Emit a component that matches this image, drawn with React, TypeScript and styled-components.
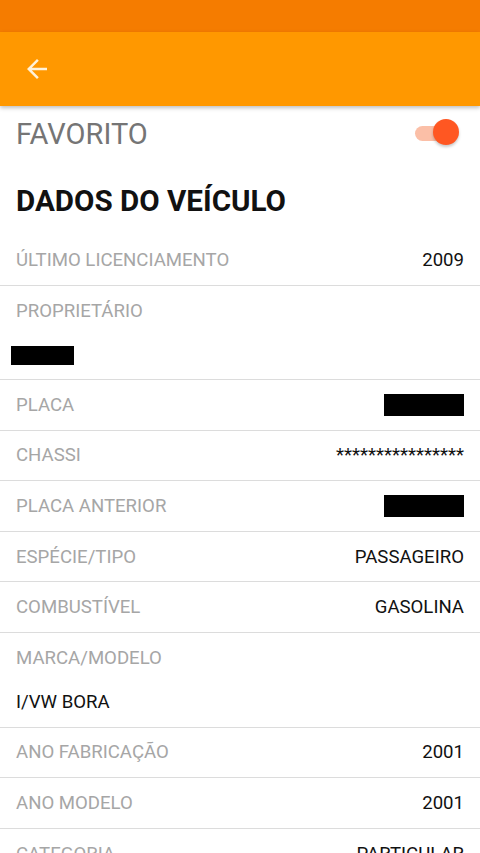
import React from "react";
import styled, { createGlobalStyle } from "styled-components";

const Global = createGlobalStyle`
  html, body { margin: 0; padding: 0; background: #fff; }
  body { font-family: Roboto, "Noto Sans", Arial, sans-serif; overflow: hidden; }
`;

const Page = styled.div`
  width: 480px;
  height: 853px;
  overflow: hidden;
  display: flex;
  flex-direction: column;
  background: #fff;
`;

const StatusBar = styled.div`
  height: 32px;
  background: #f57c00;
  flex: none;
`;

const AppBar = styled.div`
  height: 74px;
  background: #ff9800;
  display: flex;
  align-items: center;
  padding-left: 22px;
  box-shadow: 0 2px 4px rgba(0, 0, 0, 0.25);
  flex: none;
  position: relative;
  z-index: 1;
`;

const BackButton = styled.button`
  border: none;
  background: none;
  padding: 0;
  margin: 0;
  width: 30px;
  height: 30px;
  display: flex;
  align-items: center;
  justify-content: center;
  color: rgba(255, 250, 235, 0.92);
`;

const Content = styled.div`
  display: flex;
  flex-direction: column;
`;

const FavRow = styled.div`
  height: 54px;
  display: flex;
  align-items: center;
  justify-content: space-between;
  padding: 0 21px 0 16px;
  box-sizing: border-box;
`;

const FavLabel = styled.span`
  font-size: 29px;
  color: #757575;
  margin-top: 1px;
`;

const Switch = styled.div`
  position: relative;
  width: 44px;
  height: 28px;
  display: flex;
  align-items: center;
`;

const Track = styled.div`
  width: 36px;
  height: 15px;
  border-radius: 8px;
  background: #fbbfa7;
`;

const Thumb = styled.div`
  position: absolute;
  right: 0;
  top: 0;
  width: 26px;
  height: 26px;
  border-radius: 50%;
  background: #ff5722;
  box-shadow: 0 2px 3px rgba(0, 0, 0, 0.22);
`;

const SectionTitle = styled.h2`
  margin: 0;
  height: 75px;
  box-sizing: border-box;
  display: flex;
  align-items: center;
  padding: 7px 16px 0;
  font-size: 29.6px;
  font-weight: 700;
  color: #111;
`;

const Row = styled.div<{ $stacked?: boolean }>`
  display: flex;
  flex-direction: ${(p) => (p.$stacked ? "column" : "row")};
  justify-content: ${(p) => (p.$stacked ? "flex-start" : "space-between")};
  align-items: ${(p) => (p.$stacked ? "flex-start" : "center")};
  padding: 0 16px;
  border-bottom: 1.6px solid #dcdcdc;
  box-sizing: border-box;
  height: ${(p) => (p.$stacked ? "94.5px" : "50.6px")};
  flex: none;
`;

const Label = styled.span<{ $stacked?: boolean }>`
  font-size: 18.6px;
  color: #a6a6a6;
  ${(p) => (p.$stacked ? "margin-top: 14px;" : "")}
`;

const Value = styled.span<{ $stacked?: boolean }>`
  font-size: 18.6px;
  color: #111;
  ${(p) => (p.$stacked ? "margin-top: 22px;" : "")}
`;

const Redacted = styled.div<{ $w: number; $h: number; $left?: boolean }>`
  width: ${(p) => p.$w}px;
  height: ${(p) => p.$h}px;
  background: #000;
  ${(p) => (p.$left ? "margin-left: -5px; margin-top: 24px;" : "")}
`;

const ArrowBack = () => (
  <svg width="30" height="30" viewBox="0 0 24 24" fill="currentColor">
    <path d="M20 11H7.83l5.59-5.59L12 4l-8 8 8 8 1.41-1.41L7.83 13H20v-2z" />
  </svg>
);

type Item =
  | { label: string; value: string; stacked?: boolean }
  | { label: string; redact: [number, number]; stacked?: boolean };

const items: Item[] = [
  { label: "ÚLTIMO LICENCIAMENTO", value: "2009" },
  { label: "PROPRIETÁRIO", redact: [63, 19], stacked: true },
  { label: "PLACA", redact: [80, 22] },
  { label: "CHASSI", value: "****************" },
  { label: "PLACA ANTERIOR", redact: [80, 22] },
  { label: "ESPÉCIE/TIPO", value: "PASSAGEIRO" },
  { label: "COMBUSTÍVEL", value: "GASOLINA" },
  { label: "MARCA/MODELO", value: "I/VW BORA", stacked: true },
  { label: "ANO FABRICAÇÃO", value: "2001" },
  { label: "ANO MODELO", value: "2001" },
  { label: "CATEGORIA", value: "PARTICULAR" },
];

export default function App() {
  return (
    <>
      <Global />
      <Page>
        <StatusBar />
        <AppBar>
          <BackButton aria-label="Voltar">
            <ArrowBack />
          </BackButton>
        </AppBar>
        <Content>
          <FavRow>
            <FavLabel>FAVORITO</FavLabel>
            <Switch>
              <Track />
              <Thumb />
            </Switch>
          </FavRow>
          <SectionTitle>DADOS DO VEÍCULO</SectionTitle>
          {items.map((it) => (
            <Row key={it.label} $stacked={it.stacked}>
              <Label $stacked={it.stacked}>{it.label}</Label>
              {"value" in it ? (
                <Value $stacked={it.stacked}>{it.value}</Value>
              ) : (
                <Redacted $w={it.redact[0]} $h={it.redact[1]} $left={it.stacked} />
              )}
            </Row>
          ))}
        </Content>
      </Page>
    </>
  );
}
